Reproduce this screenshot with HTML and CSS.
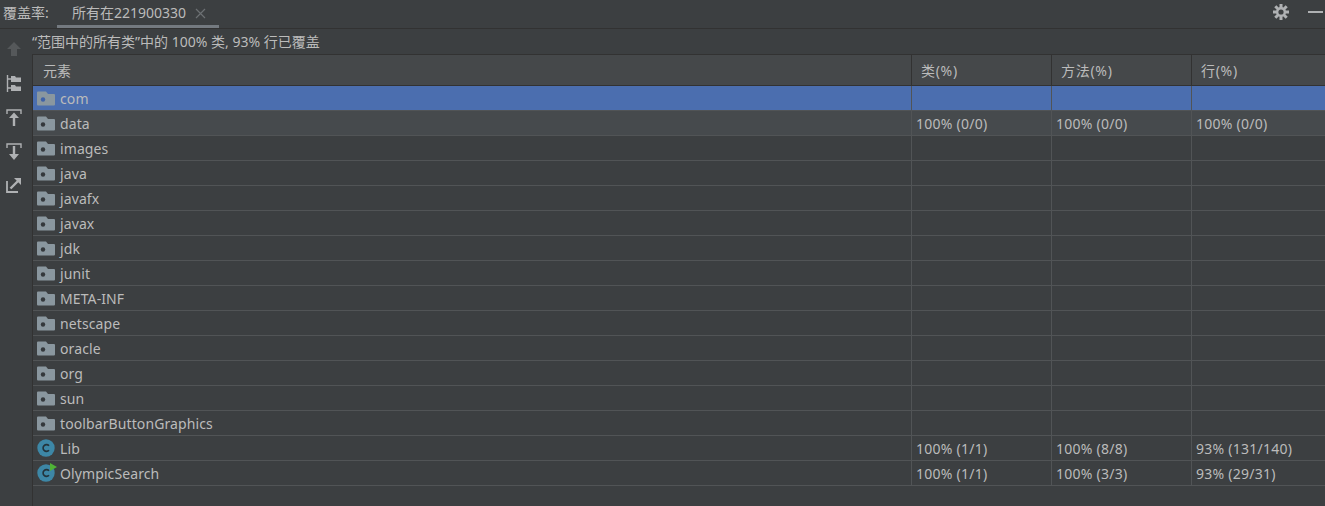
FILE: index.html
```html
<!DOCTYPE html>
<html lang="zh">
<head>
    <meta charset="UTF-8">
    <title>覆盖率</title>
    <link rel="stylesheet" href="styles.css">
</head>
<body>
    <svg class="defs" width="0" height="0">
        <symbol id="folder" viewBox="0 0 18 15">
            <path d="M0 1.5Q0 .5 1 .5H9L11 3H17Q18 3 18 4V13.5Q18 14.5 17 14.5H1Q0 14.5 0 13.5Z" fill="#8a979f"/>
            <circle cx="6" cy="8.500" r="2.200" fill="currentColor"/>
        </symbol>
        <symbol id="class" viewBox="0 0 18 18">
            <circle cx="9" cy="9" r="8.700" fill="#3d87a6"/>
            <path d="M12 6.700A3.400 3.400 0 1 0 12 11.300" fill="none" stroke="#23333b" stroke-width="1.600"/>
        </symbol>
    </svg>

    <div class="tabbar">
        <span class="tabbar-title">覆盖率:</span>
        <div class="tab">
            <span>所有在221900330</span>
            <svg class="tab-close" width="11" height="11" viewBox="0 0 11 11"><path d="M1 1L10 10M10 1L1 10" stroke="#6c7073" stroke-width="1.200"/></svg>
        </div>
        <div class="tabbar-actions">
            <svg width="16" height="16" viewBox="0 0 16 16">
                <circle cx="8" cy="8" r="5" fill="#afb1b3"/>
                <path d="M8 0V16M0 8H16M2.300 2.300L13.700 13.700M13.700 2.300L2.300 13.700" stroke="#afb1b3" stroke-width="3"/>
                <circle cx="8" cy="8" r="2.600" fill="#3c3f41"/>
            </svg>
            <span class="minimize"></span>
        </div>
    </div>

    <div class="main">
        <div class="toolbar">
            <div class="tool"><svg width="16" height="16" viewBox="0 0 16 16"><path d="M8 1L15 8H11V15H5V8H1Z" fill="#55585a"/></svg></div>
            <div class="tool"><svg width="16" height="17" viewBox="0 0 16 17"><path d="M1.500 0V17M1.500 4H5M1.500 13H5" stroke="#afb1b3" stroke-width="1.400" fill="none"/><path d="M5 1H9L10 2.500H15V7H5ZM5 10H9L10 11.500H15V16H5Z" fill="#afb1b3"/></svg></div>
            <div class="tool"><svg width="16" height="17" viewBox="0 0 16 17"><path d="M1 5V1H15V5" stroke="#afb1b3" stroke-width="1.400" fill="none"/><path d="M8 3.500L13 9H9.200V17H6.800V9H3Z" fill="#afb1b3"/></svg></div>
            <div class="tool"><svg width="16" height="17" viewBox="0 0 16 17"><path d="M1 5V1H15V5" stroke="#afb1b3" stroke-width="1.400" fill="none"/><path d="M6.800 3H9.200V11H13L8 17L3 11H6.800Z" fill="#afb1b3"/></svg></div>
            <div class="tool"><svg width="16" height="16" viewBox="0 0 16 16"><path d="M1 4V15H12" stroke="#afb1b3" stroke-width="1.800" fill="none"/><path d="M4.500 11.500L13 3" stroke="#afb1b3" stroke-width="2.400" fill="none"/><path d="M8 1H15V8Z" fill="#afb1b3"/></svg></div>
        </div>

        <div class="content">
            <div class="summary">“范围中的所有类”中的 100% 类, 93% 行已覆盖</div>
            <div class="table">
                <div class="row header">
                    <div class="cell">元素</div>
                    <div class="cell">类(%)</div>
                    <div class="cell">方法(%)</div>
                    <div class="cell">行(%)</div>
                </div>
                <div class="row selected">
                    <div class="cell name"><svg class="icon" width="18" height="15"><use href="#folder"/></svg>com</div>
                    <div class="cell"></div><div class="cell"></div><div class="cell"></div>
                </div>
                <div class="row hovered">
                    <div class="cell name"><svg class="icon" width="18" height="15"><use href="#folder"/></svg>data</div>
                    <div class="cell">100% (0/0)</div><div class="cell">100% (0/0)</div><div class="cell">100% (0/0)</div>
                </div>
                <div class="row">
                    <div class="cell name"><svg class="icon" width="18" height="15"><use href="#folder"/></svg>images</div>
                    <div class="cell"></div><div class="cell"></div><div class="cell"></div>
                </div>
                <div class="row">
                    <div class="cell name"><svg class="icon" width="18" height="15"><use href="#folder"/></svg>java</div>
                    <div class="cell"></div><div class="cell"></div><div class="cell"></div>
                </div>
                <div class="row">
                    <div class="cell name"><svg class="icon" width="18" height="15"><use href="#folder"/></svg>javafx</div>
                    <div class="cell"></div><div class="cell"></div><div class="cell"></div>
                </div>
                <div class="row">
                    <div class="cell name"><svg class="icon" width="18" height="15"><use href="#folder"/></svg>javax</div>
                    <div class="cell"></div><div class="cell"></div><div class="cell"></div>
                </div>
                <div class="row">
                    <div class="cell name"><svg class="icon" width="18" height="15"><use href="#folder"/></svg>jdk</div>
                    <div class="cell"></div><div class="cell"></div><div class="cell"></div>
                </div>
                <div class="row">
                    <div class="cell name"><svg class="icon" width="18" height="15"><use href="#folder"/></svg>junit</div>
                    <div class="cell"></div><div class="cell"></div><div class="cell"></div>
                </div>
                <div class="row">
                    <div class="cell name"><svg class="icon" width="18" height="15"><use href="#folder"/></svg>META-INF</div>
                    <div class="cell"></div><div class="cell"></div><div class="cell"></div>
                </div>
                <div class="row">
                    <div class="cell name"><svg class="icon" width="18" height="15"><use href="#folder"/></svg>netscape</div>
                    <div class="cell"></div><div class="cell"></div><div class="cell"></div>
                </div>
                <div class="row">
                    <div class="cell name"><svg class="icon" width="18" height="15"><use href="#folder"/></svg>oracle</div>
                    <div class="cell"></div><div class="cell"></div><div class="cell"></div>
                </div>
                <div class="row">
                    <div class="cell name"><svg class="icon" width="18" height="15"><use href="#folder"/></svg>org</div>
                    <div class="cell"></div><div class="cell"></div><div class="cell"></div>
                </div>
                <div class="row">
                    <div class="cell name"><svg class="icon" width="18" height="15"><use href="#folder"/></svg>sun</div>
                    <div class="cell"></div><div class="cell"></div><div class="cell"></div>
                </div>
                <div class="row">
                    <div class="cell name"><svg class="icon" width="18" height="15"><use href="#folder"/></svg>toolbarButtonGraphics</div>
                    <div class="cell"></div><div class="cell"></div><div class="cell"></div>
                </div>
                <div class="row">
                    <div class="cell name"><svg class="icon" width="18" height="18"><use href="#class"/></svg>Lib</div>
                    <div class="cell">100% (1/1)</div><div class="cell">100% (8/8)</div><div class="cell">93% (131/140)</div>
                </div>
                <div class="row">
                    <div class="cell name">
                        <span class="icon-wrap">
                            <svg class="icon" width="18" height="18"><use href="#class"/></svg>
                            <svg class="run-badge" width="7" height="8" viewBox="0 0 7 8"><path d="M0 0L7 4L0 8Z" fill="#4fb336"/></svg>
                        </span>OlympicSearch
                    </div>
                    <div class="cell">100% (1/1)</div><div class="cell">100% (3/3)</div><div class="cell">93% (29/31)</div>
                </div>
            </div>
        </div>
    </div>
</body>
</html>
```

FILE: styles.css
```css
* {
    box-sizing: border-box;
}

html, body {
    margin: 0;
    height: 506px;
    overflow: hidden;
}

body {
    background-color: #3c3f41;
    color: #bbbbbb;
    font-family: "Noto Sans", "Noto Sans CJK SC", sans-serif;
    font-size: 14px;
}

.defs {
    display: block;
    height: 0;
}

.tabbar {
    display: flex;
    align-items: stretch;
    height: 29px;
    border-bottom: 1px solid #323232;
}

.tabbar-title {
    width: 57px;
    padding: 2px 0 0 3px;
}

.tab {
    display: flex;
    align-items: flex-start;
    gap: 9px;
    width: 162px;
    height: 28px;
    padding: 2px 0 0 15px;
    border-bottom: 3px solid #747a80;
}

.tab-close {
    margin-top: 6px;
}

.tabbar-actions {
    display: flex;
    align-items: center;
    gap: 19px;
    margin-left: auto;
    padding: 0 2px 4px 0;
}

.minimize {
    width: 15px;
    height: 2px;
    background-color: #afb1b3;
}

.main {
    display: flex;
}

.toolbar {
    width: 28px;
    padding-top: 3px;
}

.tool {
    display: flex;
    align-items: center;
    justify-content: center;
    height: 34px;
}

.content {
    flex: 1;
    min-width: 0;
}

.summary {
    height: 25px;
    padding: 2px 0 0 4px;
    white-space: nowrap;
}

.table {
    height: 452px;
    border-left: 1px solid #323232;
    margin-left: 4px;
}

.row {
    display: grid;
    grid-template-columns: 878px 140px 140px 1fr;
    height: 25px;
    border-bottom: 1px solid #515456;
}

.cell {
    display: flex;
    align-items: center;
    padding-left: 4px;
    border-left: 1px solid #515456;
    white-space: nowrap;
}

.cell + .cell {
    letter-spacing: .25px;
}

.cell:first-child {
    border-left: none;
}

.name {
    letter-spacing: .1px;
}

.icon {
    flex: none;
    margin-right: 5px;
    color: #34383b;
}

.icon-wrap {
    position: relative;
    display: flex;
}

.run-badge {
    position: absolute;
    left: 13px;
    top: -1px;
}

.header {
    height: 32px;
    background-color: #45484a;
    border-top: 1px solid #323232;
    border-bottom: 1px solid #323232;
}

.header .cell {
    padding-left: 10px;
    border-left-color: #323232;
}

.header .cell + .cell {
    padding-left: 9px;
    letter-spacing: .7px;
}

.selected {
    background-color: #4b6eaf;
}

.selected .icon {
    color: #3f62a8;
}

.hovered {
    background-color: #464a4d;
}
```
